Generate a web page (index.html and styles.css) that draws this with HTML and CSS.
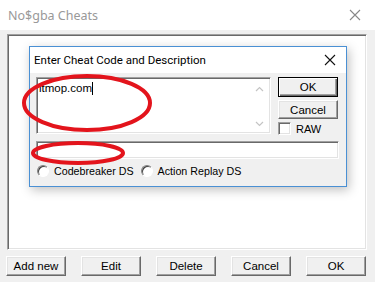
FILE: index.html
```html
<!DOCTYPE html>
<html lang="en">
<head>
  <meta charset="UTF-8" />
  <title>No$gba Cheats</title>
  <link rel="stylesheet" href="styles.css">
</head>
<body>

  <div class="window">
    <!-- outer window title -->
    <div class="titlebar">
      <span class="title">No$gba Cheats</span>
      <svg class="close" width="12" height="12" viewBox="0 0 12 12">
        <path d="M1 1L11 11M11 1L1 11" stroke="#888" stroke-width="1.1" fill="none"/>
      </svg>
    </div>

    <div class="window-body">
      <div class="listbox">

        <!-- Enter code dialog -->
        <div class="dialog">
          <div class="dialog-title">
            <span>Enter Cheat Code and Description</span>
            <svg class="close" width="12" height="12" viewBox="0 0 12 12">
              <path d="M1 1L11 11M11 1L1 11" stroke="#111" stroke-width="1.1" fill="none"/>
            </svg>
          </div>
          <div class="dialog-body">
            <div class="top-row">
              <div class="code-box">
                <span class="code-text">itmop.com</span><span class="caret"></span>
                <svg class="arrow up" width="9" height="6" viewBox="0 0 9 6">
                  <path d="M1 5L4.5 1.5L8 5" stroke="#c4c4c4" stroke-width="1.2" fill="none"/>
                </svg>
                <svg class="arrow down" width="9" height="6" viewBox="0 0 9 6">
                  <path d="M1 1L4.5 4.5L8 1" stroke="#c4c4c4" stroke-width="1.2" fill="none"/>
                </svg>
              </div>
              <div class="side">
                <button class="btn default">OK</button>
                <button class="btn short">Cancel</button>
                <label class="check"><span class="box"></span>RAW</label>
              </div>
            </div>
            <div class="desc-box"></div>
            <div class="radios">
              <label class="radio"><span class="dot"></span>Codebreaker DS</label>
              <label class="radio"><span class="dot"></span>Action Replay DS</label>
            </div>
          </div>
        </div>

      </div>

      <div class="buttons">
        <button class="btn">Add new</button>
        <button class="btn">Edit</button>
        <button class="btn">Delete</button>
        <button class="btn">Cancel</button>
        <button class="btn">OK</button>
      </div>
    </div>
  </div>

  <!-- red annotation marks -->
  <svg class="marks" width="375" height="282" viewBox="0 0 375 282">
    <ellipse cx="87" cy="103" rx="63" ry="27" stroke="#e3141c" stroke-width="4" fill="none"/>
    <ellipse cx="78" cy="153" rx="45" ry="10" stroke="#e3141c" stroke-width="4" fill="none"/>
  </svg>

</body>
</html>
```

FILE: styles.css
```css
* {
  margin: 0;
  padding: 0;
  box-sizing: border-box;
}

body {
  width: 375px;
  height: 282px;
  overflow: hidden;
  background: #f0f0f0;
  font-family: 'Liberation Sans', Arial, sans-serif;
  font-size: 11px;
  color: #000;
  position: relative;
}

.window {
  display: flex;
  flex-direction: column;
  height: 100%;
}

.titlebar {
  height: 30px;
  background: #fff;
  display: flex;
  align-items: center;
  justify-content: space-between;
  padding: 0 14px 0 8px;
}

.title {
  font-family: 'Noto Sans', sans-serif;
  font-size: 12.5px;
  color: #999;
}

.window-body {
  flex: 1;
  padding: 4px 8px 0 7px;
}

.listbox {
  position: relative;
  height: 216px;
  background: #fff;
  border-top: 1px solid #a0a0a0;
  border-left: 1px solid #a0a0a0;
  border-right: 1px solid #fff;
  border-bottom: 1px solid #fff;
  box-shadow: inset 1px 1px 0 #696969, inset -1px -1px 0 #e3e3e3;
}

.buttons {
  display: flex;
  gap: 15px;
  padding-top: 6px;
  margin-left: -1px;
}

.btn {
  font-family: 'Liberation Sans', Arial, sans-serif;
  font-size: 11.5px;
  background: #f0f0f0;
  color: #000;
  height: 20px;
  width: 60px;
  border-top: 1px solid #fff;
  border-left: 1px solid #fff;
  border-right: 1px solid #696969;
  border-bottom: 1px solid #696969;
  box-shadow: inset -1px -1px 0 #a0a0a0, inset 1px 1px 0 #e3e3e3;
  cursor: default;
}

.btn.short {
  height: 19px;
}

.btn.default {
  border: 1px solid #000;
  box-shadow: inset 1px 1px 0 #fff, inset -1px -1px 0 #696969, inset -2px -2px 0 #a0a0a0;
}

/* dialog on top of the list */
.dialog {
  position: absolute;
  left: 21px;
  top: 11px;
  width: 318px;
  height: 141px;
  border: 1px solid #4a90d4;
  background: #f0f0f0;
  box-shadow: 2px 3px 10px rgba(0,0,0,0.25);
  display: flex;
  flex-direction: column;
}

.dialog-title {
  height: 26px;
  background: #fff;
  display: flex;
  align-items: center;
  justify-content: space-between;
  padding: 0 10px 0 4px;
  font-family: Roboto, sans-serif;
  font-size: 11.5px;
}

.dialog-body {
  padding: 4px 8px 0 6px;
  display: flex;
  flex-direction: column;
}

.top-row {
  display: flex;
  gap: 7px;
}

.code-box {
  position: relative;
  width: 236px;
  height: 57px;
  background: #fff;
  border-top: 1px solid #a0a0a0;
  border-left: 1px solid #a0a0a0;
  border-right: 1px solid #fff;
  border-bottom: 1px solid #fff;
  box-shadow: inset 1px 1px 0 #696969, inset -1px -1px 0 #e3e3e3;
  padding: 4px 0 0 2px;
  font-size: 11.5px;
}

.caret {
  display: inline-block;
  width: 1px;
  height: 13px;
  background: #000;
  vertical-align: -3px;
}

.arrow {
  position: absolute;
  right: 6px;
}

.arrow.up { top: 8px; }
.arrow.down { bottom: 6px; }

.side {
  display: flex;
  flex-direction: column;
  gap: 3px;
}

.check, .radio {
  display: flex;
  align-items: center;
  gap: 5px;
}

.box {
  width: 13px;
  height: 13px;
  background: #fff;
  border-top: 1px solid #a0a0a0;
  border-left: 1px solid #a0a0a0;
  border-right: 1px solid #fff;
  border-bottom: 1px solid #fff;
  box-shadow: inset 1px 1px 0 #696969, inset -1px -1px 0 #e3e3e3;
}

.desc-box {
  margin-top: 6px;
  width: 303px;
  height: 18px;
  background: #fff;
  border-top: 1px solid #a0a0a0;
  border-left: 1px solid #a0a0a0;
  border-right: 1px solid #fff;
  border-bottom: 1px solid #fff;
  box-shadow: inset 1px 1px 0 #696969, inset -1px -1px 0 #e3e3e3;
}

.radios {
  display: flex;
  gap: 7px;
  margin-top: 6px;
  padding-left: 1px;
  font-size: 10.7px;
}

.dot {
  width: 12px;
  height: 12px;
  border-radius: 50%;
  background: #fff;
  border: 1px solid;
  border-color: #808080 #fff #fff #808080;
  box-shadow: inset 1px 1px 0 #404040;
}

.marks {
  position: absolute;
  left: 0;
  top: 0;
  pointer-events: none;
}
```
